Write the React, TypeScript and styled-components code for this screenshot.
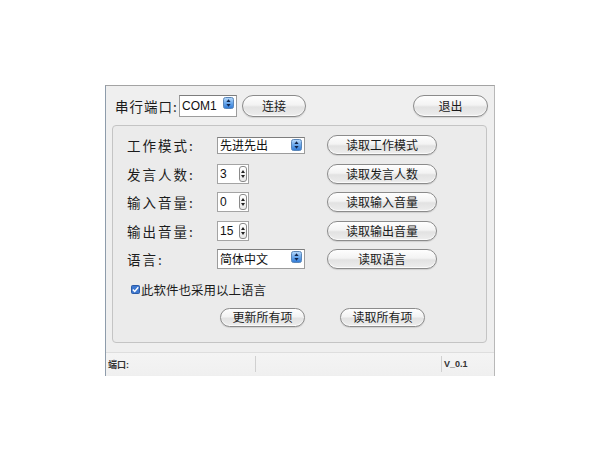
import React from "react";
import styled, { createGlobalStyle } from "styled-components";

const Global = createGlobalStyle`
  html, body { margin: 0; padding: 0; background: #ffffff; }
  body { font-family: "Noto Sans CJK SC", "Noto Sans", sans-serif; color: #1c1c1c; }
`;

const Window = styled.div`
  margin: 85px 0 0 105px;
  width: 388px;
  height: 290px;
  border-top: 1px solid #a3a3a3;
  border-left: 1px solid #8e9cab;
  border-right: 1px solid #b8b8b8;
  background: #efefef;
  display: flex;
  flex-direction: column;
`;

const TopBar = styled.div`
  display: flex;
  align-items: center;
  height: 23px;
  margin: 8px 6px 0 9px;
`;

const PortLabel = styled.span`
  width: 64px;
  font-size: 13.5px;
  letter-spacing: 1px;
  line-height: 22px;
  white-space: nowrap;
`;

const Spacer = styled.div`
  flex: 1;
`;

const Pill = styled.button<{ $w: number; $h: number; $ml?: number }>`
  width: ${(p) => p.$w}px;
  height: ${(p) => p.$h}px;
  margin-left: ${(p) => p.$ml ?? 0}px;
  padding: 0;
  border: 1px solid #8b8b8b;
  border-radius: ${(p) => p.$h / 2}px;
  background: linear-gradient(#fefefe 0%, #f3f3f3 45%, #e2e2e2 55%, #ededed 100%);
  box-shadow: inset 0 -1px 1px rgba(255, 255, 255, 0.8), 0 1px 1px rgba(0, 0, 0, 0.12);
  font-family: "Noto Sans CJK SC", sans-serif;
  font-size: 12px;
  color: #1a1a1a;
  line-height: 1;
  display: flex;
  align-items: center;
  justify-content: center;
  flex-shrink: 0;
`;

const SelectBox = styled.div<{ $w: number; $h: number }>`
  width: ${(p) => p.$w}px;
  height: ${(p) => p.$h}px;
  box-sizing: border-box;
  border: 1px solid #9c9c9c;
  border-top-color: #7d7d7d;
  background: #ffffff;
  display: flex;
  align-items: center;
  padding: 0 2px 0 2px;
  flex-shrink: 0;
`;

const SelectText = styled.span<{ $latin?: boolean }>`
  flex: 1;
  font-family: ${(p) =>
    p.$latin ? `"Liberation Sans", "Noto Sans CJK SC", sans-serif` : `"Noto Sans CJK SC", sans-serif`};
  font-size: 12px;
  line-height: 1;
  color: #111;
`;

const ArrowWrap = styled.span`
  display: flex;
  align-self: flex-start;
  margin-top: 1px;
`;

const Group = styled.div`
  margin: 8px 7px 0 6px;
  height: 218px;
  box-sizing: border-box;
  border: 1px solid #c4c4c4;
  border-radius: 4px;
  background: #ebebeb;
  padding: 5px 0 0 14px;
  display: flex;
  flex-direction: column;
`;

const Grid = styled.div`
  display: grid;
  grid-template-columns: 90px 110px 110px;
  grid-auto-rows: 28.5px;
  align-items: center;
`;

const FieldLabel = styled.span`
  font-size: 13.5px;
  letter-spacing: 2px;
  white-space: nowrap;
  color: #1c1c1c;
`;

const SpinBox = styled.div`
  width: 32px;
  height: 20px;
  box-sizing: border-box;
  border: 1px solid #a4a4a4;
  background: #fff;
  display: flex;
  align-items: center;
  padding: 0 1px 0 2px;
`;

const SpinText = styled.span`
  flex: 1;
  font-family: "Liberation Sans", sans-serif;
  font-size: 12px;
  color: #111;
`;

const SpinBtn = styled.span`
  width: 8px;
  height: 16px;
  box-sizing: border-box;
  border: 1px solid #8a8a8a;
  border-radius: 3px;
  background: linear-gradient(#ffffff, #e8e8e8);
  display: flex;
  flex-direction: column;
  align-items: center;
  justify-content: space-around;
  padding: 2px 0;
`;

const CheckRow = styled.label`
  display: flex;
  align-items: center;
  height: 16px;
  margin: 8px 0 0 4px;
  font-size: 12.5px;
  color: #1c1c1c;
  gap: 0px;
`;

const BottomRow = styled.div`
  display: flex;
  align-items: center;
  margin: 10px 0 0 93px;
  gap: 35px;
`;

const StatusBar = styled.div`
  margin-top: 9px;
  height: 22px;
  border-top: 1px solid #dedede;
  background: linear-gradient(#f4f4f4, #f0f0f0);
  display: flex;
  align-items: center;
`;

const StatusCell = styled.div<{ $w?: number; $flex?: boolean; $last?: boolean }>`
  ${(p) => (p.$flex ? "flex: 1;" : `width: ${p.$w}px;`)}
  height: 16px;
  box-sizing: border-box;
  border-right: ${(p) => (p.$last ? "none" : "1px solid #d0d0d0")};
  padding-left: 2px;
  display: flex;
  align-items: center;
  font-family: "Liberation Sans", "Noto Sans CJK SC", sans-serif;
  font-size: 9px;
  font-weight: bold;
  color: #333;
`;

const UpDownArrow = () => (
  <svg width="11" height="12" viewBox="0 0 11 12">
    <defs>
      <linearGradient id="ab" x1="0" y1="0" x2="0" y2="1">
        <stop offset="0" stopColor="#bcdcfb" />
        <stop offset="0.5" stopColor="#6aa8ec" />
        <stop offset="1" stopColor="#2f79d6" />
      </linearGradient>
    </defs>
    <rect x="0.5" y="0.5" width="10" height="11" rx="2" fill="url(#ab)" stroke="#5a86b8" />
    <path d="M5.5 2.3 L7.6 4.9 H3.4 Z" fill="#10244a" />
    <path d="M5.5 9.7 L7.6 7.1 H3.4 Z" fill="#10244a" />
  </svg>
);

const Tri = ({ up }: { up?: boolean }) => (
  <svg width="4" height="3" viewBox="0 0 4 3">
    <path d={up ? "M2 0 L4 3 H0 Z" : "M0 0 H4 L2 3 Z"} fill="#222" />
  </svg>
);

const Check = () => (
  <svg width="9" height="9" viewBox="0 0 9 9" style={{ marginRight: 1 }}>
    <rect x="0.5" y="0.5" width="8" height="8" rx="1" fill="#3e78cf" stroke="#2a5aa6" />
    <path d="M1.8 4.6 L3.7 6.5 L7.3 2.2" fill="none" stroke="#fff" strokeWidth="1.4" />
  </svg>
);

const Select = ({ w, h, text, latin }: { w: number; h: number; text: string; latin?: boolean }) => (
  <SelectBox $w={w} $h={h}>
    <SelectText $latin={latin}>{text}</SelectText>
    <ArrowWrap>
      <UpDownArrow />
    </ArrowWrap>
  </SelectBox>
);

const Spin = ({ value }: { value: string }) => (
  <SpinBox>
    <SpinText>{value}</SpinText>
    <SpinBtn>
      <Tri up />
      <Tri />
    </SpinBtn>
  </SpinBox>
);

type Row = { label: string; control: React.ReactNode; button: string };

const rows: Row[] = [
  { label: "工作模式:", control: <Select w={88} h={17} text="先进先出" />, button: "读取工作模式" },
  { label: "发言人数:", control: <Spin value="3" />, button: "读取发言人数" },
  { label: "输入音量:", control: <Spin value="0" />, button: "读取输入音量" },
  { label: "输出音量:", control: <Spin value="15" />, button: "读取输出音量" },
  { label: "语言:", control: <Select w={88} h={20} text="简体中文" />, button: "读取语言" },
];

export default function App() {
  return (
    <>
      <Global />
      <Window>
        <TopBar>
          <PortLabel>串行端口:</PortLabel>
          <Select w={58} h={22} text="COM1" latin />
          <Pill $w={64} $h={22} $ml={5}>
            连接
          </Pill>
          <Spacer />
          <Pill $w={75} $h={22}>
            退出
          </Pill>
        </TopBar>
        <Group>
          <Grid>
            {rows.map((r) => (
              <React.Fragment key={r.label}>
                <FieldLabel>{r.label}</FieldLabel>
                <div>{r.control}</div>
                <Pill $w={110} $h={20}>
                  {r.button}
                </Pill>
              </React.Fragment>
            ))}
          </Grid>
          <CheckRow>
            <Check />
            此软件也采用以上语言
          </CheckRow>
          <BottomRow>
            <Pill $w={85} $h={19}>
              更新所有项
            </Pill>
            <Pill $w={85} $h={19}>
              读取所有项
            </Pill>
          </BottomRow>
        </Group>
        <StatusBar>
          <StatusCell $w={150}>端口:</StatusCell>
          <StatusCell $w={186} />
          <StatusCell $flex $last>
            V_0.1
          </StatusCell>
        </StatusBar>
      </Window>
    </>
  );
}
